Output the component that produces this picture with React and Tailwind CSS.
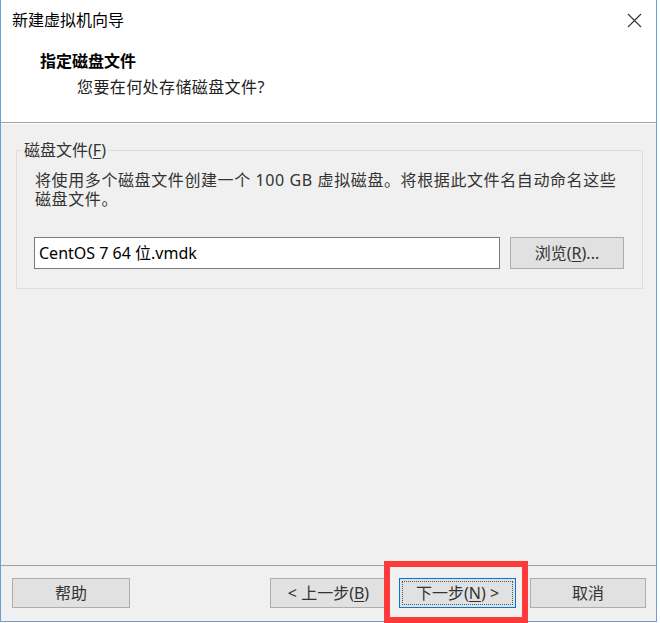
import React from "react";

/* 新建虚拟机向导 - 指定磁盘文件 */

const FONT = "font-['Noto_Sans','Noto_Sans_CJK_SC',sans-serif]";

function Btn({ children, className = "" }) {
    return (
        <button
            className={`h-[30px] border border-[#adadad] bg-[#e1e1e1] text-[16px] text-[#333] flex items-center justify-center ${className}`}
        >
            {children}
        </button>
    );
}

function Key({ k }) {
    return (
        <>
            (<span className="underline underline-offset-2">{k}</span>)
        </>
    );
}

export default function App() {
    return (
        <div className={`relative w-[660px] h-[623px] bg-white ${FONT}`}>
            {/* WINDOW */}
            <div className="w-[657px] h-[622px] flex flex-col border-x border-b border-[#6a9fd6] bg-[#f0f0f0]">

                {/* HEADER */}
                <div className="h-[122px] bg-white flex flex-col shrink-0">
                    <div className="h-[40px] flex items-center justify-between pl-[11px] pr-[14px]">
                        <span className="text-[16px] leading-[20px] text-black">新建虚拟机向导</span>
                        <svg width="15" height="15" viewBox="0 0 15 15" className="text-[#333]">
                            <path d="M1 1 L14 14 M14 1 L1 14" stroke="currentColor" strokeWidth="1.1" fill="none" />
                        </svg>
                    </div>
                    <div className="mt-[11px] pl-[39px] text-[16px] leading-[20px] font-bold text-black">
                        指定磁盘文件
                    </div>
                    <div className="mt-[6px] pl-[76px] text-[16px] leading-[20px] tracking-[0.4px] text-[#222]">
                        您要在何处存储磁盘文件?
                    </div>
                </div>
                <div className="h-px bg-[#a0a0a0] shrink-0" />
                <div className="h-px bg-white shrink-0" />

                {/* BODY */}
                <div className="flex-1 px-[15px] pt-[16px]">
                    <fieldset className="border border-[#dcdcdc] pl-[17px] pr-[18px] pb-[19px]">
                        <legend className="-ml-[12px] px-[2px] text-[16px] leading-[20px] text-[#333]">
                            磁盘文件<Key k="F" />
                        </legend>
                        <div className="mt-[11px] text-[16px] leading-[19px] tracking-[0.6px] text-[#333] whitespace-nowrap pl-px">
                            <div>将使用多个磁盘文件创建一个 100 GB 虚拟磁盘。将根据此文件名自动命名这些</div>
                            <div>磁盘文件。</div>
                        </div>
                        <div className="mt-[28px] flex items-center gap-[10px]">
                            <div className="w-[466px] h-[32px] bg-white border border-[#7a7a7a] flex items-center pl-[4px] text-[16px] text-black">
                                CentOS 7 64 位.vmdk
                            </div>
                            <Btn className="w-[114px] h-[32px]">
                                浏览<Key k="R" />...
                            </Btn>
                        </div>
                    </fieldset>
                </div>

                {/* FOOTER */}
                <div className="h-px bg-[#a0a0a0] shrink-0" />
                <div className="h-[55px] shrink-0 flex items-start pt-[12px] pl-[11px] pr-[10px]">
                    <Btn className="w-[118px]">帮助</Btn>
                    <div className="flex-1" />
                    <Btn className="w-[117px]">
                        &lt; 上一步<Key k="B" />
                    </Btn>
                    <button className="ml-[12px] w-[117px] h-[30px] border border-[#0078d7] bg-[#e1e1e1] p-[2px]">
                        <span className="w-full h-full border border-dotted border-[#555] flex items-center justify-center text-[16px] text-[#333]">
                            下一步<Key k="N" />&nbsp;&gt;
                        </span>
                    </button>
                    <Btn className="ml-[14px] w-[116px]">取消</Btn>
                </div>
            </div>

            {/* RED HIGHLIGHT */}
            <div className="absolute left-[384px] top-[561px] w-[144px] h-[62px] border-[6px] border-[#fc3a3a]" />
        </div>
    );
}
